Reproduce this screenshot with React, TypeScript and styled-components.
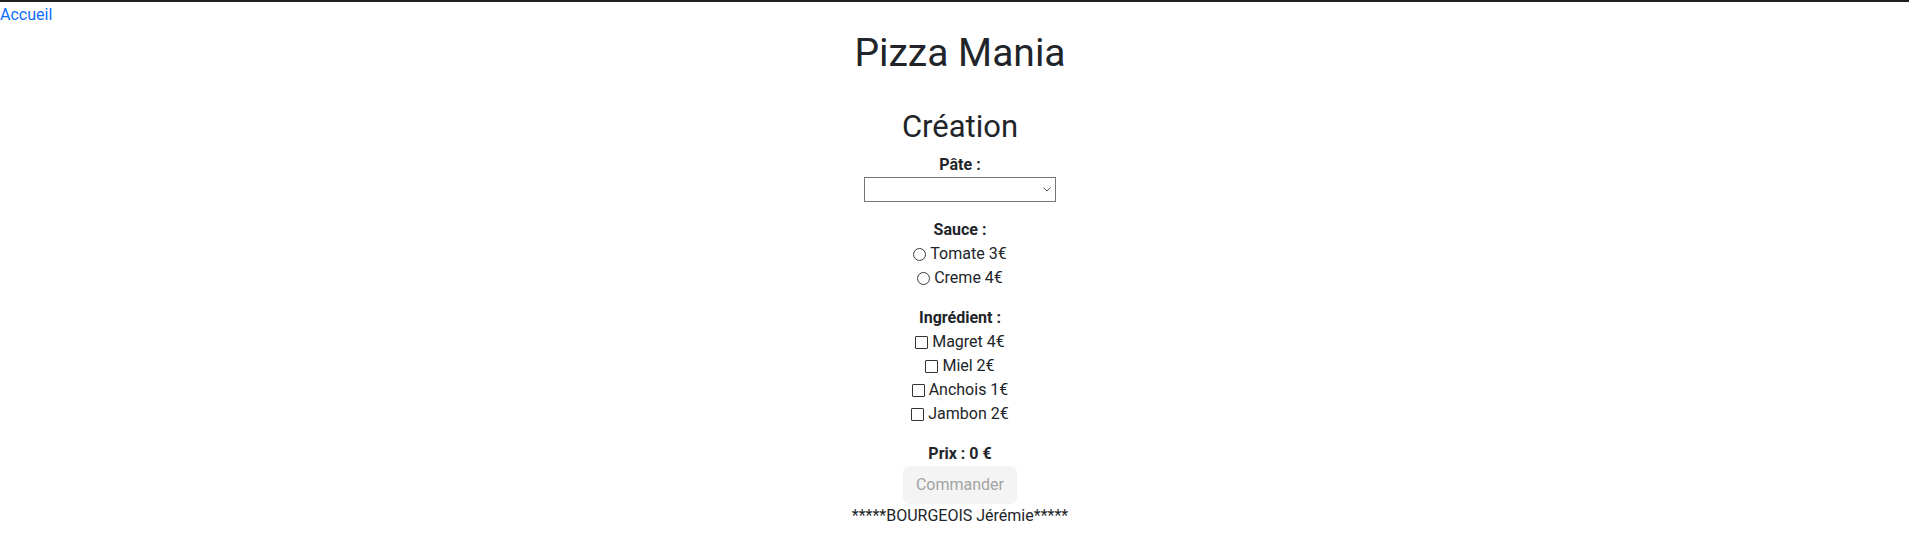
import styled, { createGlobalStyle } from "styled-components";

const GlobalStyle = createGlobalStyle`
  html, body {
    margin: 0;
    padding: 0;
  }
  body {
    border-top: 2px solid #1f1f1f;
    padding-top: 1px;
    background: #ffffff;
    color: #212529;
    font-family: Roboto, "Noto Sans", "Liberation Sans", Arial, sans-serif;
    font-size: 16px;
    line-height: 1.5;
  }
`;

const HomeLink = styled.a`
  display: block;
  width: max-content;
  color: #0d6efd;
  text-decoration: none;
`;

const Main = styled.main`
  display: flex;
  flex-direction: column;
  align-items: center;
  padding-left: 11px;
`;

const Title = styled.h1`
  margin: 0 0 6px;
  padding-top: 2px;
  font-size: 39px;
  font-weight: 400;
  line-height: 48px;
`;

const SubTitle = styled.h2`
  margin: 24px 0 7px;
  padding-top: 1px;
  font-size: 31px;
  font-weight: 400;
  line-height: 38px;
`;

const Form = styled.form`
  display: flex;
  flex-direction: column;
  align-items: center;
`;

const Group = styled.div`
  display: flex;
  flex-direction: column;
  align-items: center;
  margin-bottom: 16px;
`;

const Label = styled.span`
  font-weight: 700;
  line-height: 24px;
`;

const SelectWrap = styled.div`
  position: relative;
  width: 192px;
  height: 25px;
`;

const Select = styled.select`
  appearance: none;
  box-sizing: border-box;
  width: 100%;
  height: 100%;
  margin: 0;
  padding: 0 20px 0 4px;
  border: 1px solid #767676;
  border-radius: 0;
  background: #fff;
  font: inherit;
  color: #212529;
`;

const Chevron = styled.svg`
  position: absolute;
  right: 5px;
  top: 10px;
  pointer-events: none;
`;

const Option = styled.label`
  display: flex;
  align-items: center;
  gap: 4px;
  height: 24px;
`;

const Radio = styled.input`
  appearance: none;
  box-sizing: border-box;
  width: 13px;
  height: 13px;
  margin: 1px 0 0;
  border: 1px solid #3c3c3c;
  border-radius: 50%;
  background: #fff;
`;

const Check = styled.input`
  appearance: none;
  box-sizing: border-box;
  width: 13px;
  height: 13px;
  margin: 1px 0 0;
  border: 1px solid #333;
  border-radius: 1px;
  background: #fff;
`;

const Price = styled.span`
  font-weight: 700;
  line-height: 24px;
`;

const OrderButton = styled.button`
  box-sizing: border-box;
  height: 38px;
  padding: 6px 12px;
  border: 1px solid transparent;
  border-radius: 6px;
  background: #f4f4f4;
  color: #a3a3a3;
  font: inherit;
  line-height: 24px;
`;

const Signature = styled.p`
  margin: 0;
  line-height: 24px;
`;

const sauces = [
  { id: "tomate", label: "Tomate 3€" },
  { id: "creme", label: "Creme 4€" },
];

const ingredients = [
  { id: "magret", label: "Magret 4€" },
  { id: "miel", label: "Miel 2€" },
  { id: "anchois", label: "Anchois 1€" },
  { id: "jambon", label: "Jambon 2€" },
];

function App() {
  return (
    <>
      <GlobalStyle />
      <HomeLink href="#">Accueil</HomeLink>
      <Main>
        <Title>Pizza Mania</Title>
        <SubTitle>Création</SubTitle>
        <Form onSubmit={(e) => e.preventDefault()}>
          <Group>
            <Label>Pâte :</Label>
            <SelectWrap>
              <Select defaultValue="">
                <option value=""></option>
              </Select>
              <Chevron width="8" height="5" viewBox="0 0 8 5">
                <path d="M0.5 0.5 L4 4 L7.5 0.5" fill="none" stroke="#555" strokeWidth="1" />
              </Chevron>
            </SelectWrap>
          </Group>
          <Group>
            <Label>Sauce :</Label>
            {sauces.map((s) => (
              <Option key={s.id}>
                <Radio type="radio" name="sauce" value={s.id} />
                {s.label}
              </Option>
            ))}
          </Group>
          <Group>
            <Label>Ingrédient :</Label>
            {ingredients.map((i) => (
              <Option key={i.id}>
                <Check type="checkbox" value={i.id} />
                {i.label}
              </Option>
            ))}
          </Group>
          <Price>Prix : 0 €</Price>
          <OrderButton type="submit" disabled>
            Commander
          </OrderButton>
        </Form>
        <Signature>*****BOURGEOIS Jérémie*****</Signature>
      </Main>
    </>
  );
}

export default App;
